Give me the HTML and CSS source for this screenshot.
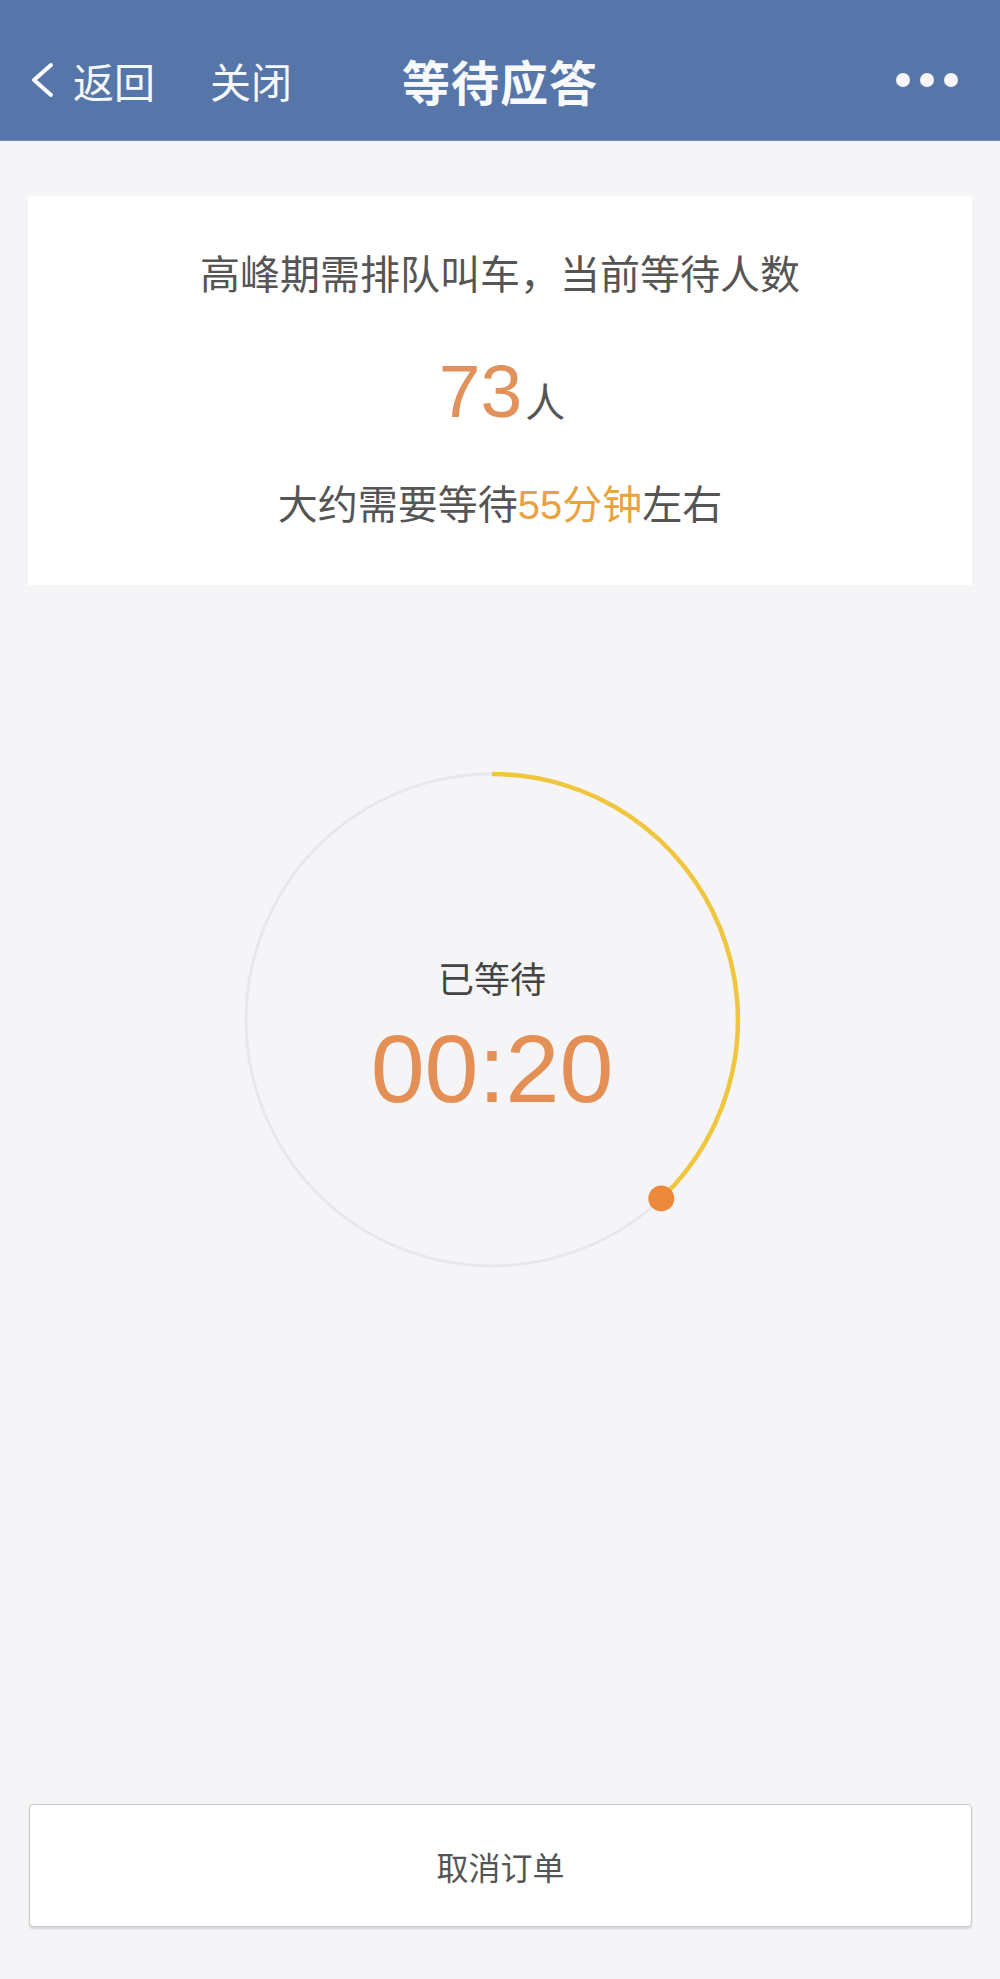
FILE: index.html
```html
<!DOCTYPE html>
<html lang="zh">
<head>
<meta charset="utf-8">
<link rel="stylesheet" href="styles.css">
</head>
<body>
<div class="page">
  <header class="nav">
    <div class="nav-left">
      <svg class="chev" width="28" height="36" viewBox="0 0 28 36"><path d="M23 3 L6 18 L23 33" fill="none" stroke="#fff" stroke-width="4" stroke-linecap="round" stroke-linejoin="round"/></svg>
      <span class="nav-link back">返回</span>
      <span class="nav-link close">关闭</span>
    </div>
    <div class="nav-title">等待应答</div>
    <div class="nav-right">
      <span class="dot"></span><span class="dot"></span><span class="dot"></span>
    </div>
  </header>

  <section class="card">
    <p class="line">高峰期需排队叫车，当前等待人数</p>
    <p class="count"><span class="num">73</span><span class="unit">人</span></p>
    <p class="line">大约需要等待<span class="hl">55分钟</span>左右</p>
  </section>

  <div class="ring">
    <svg class="ring-svg" width="520" height="520" viewBox="0 0 520 520">
      <circle cx="260" cy="260" r="246" fill="none" stroke="#e7e7ec" stroke-width="3"/>
      <path d="M260 14 A246 246 0 0 1 429.3 438.4" fill="none" stroke="#efc63e" stroke-width="4.5"/>
      <circle cx="429.3" cy="438.4" r="13" fill="#ec893b"/>
    </svg>
    <div class="ring-text">
      <div class="ring-label">已等待</div>
      <div class="ring-time">00:20</div>
    </div>
  </div>

  <button class="cancel">取消订单</button>
</div>
</body>
</html>
```

FILE: styles.css
```css
* { box-sizing: border-box; }
html, body { margin: 0; padding: 0; }
body {
  background: #f5f5f8;
  font-family: "Liberation Sans", "Noto Sans CJK SC", sans-serif;
  color: #555;
}
.page {
  width: 1000px;
  min-height: 1979px;
  display: flex;
  flex-direction: column;
  padding-bottom: 52px;
}
.nav {
  height: 141px;
  padding-top: 20px;
  background: #5675a9;
  display: grid;
  grid-template-columns: 1fr auto 1fr;
  align-items: center;
  color: #fff;
  border-bottom: 1px solid #6d8bb5;
}
.nav-left {
  display: flex;
  align-items: center;
  padding-left: 28px;
}
.chev { display: block; }
.nav-link {
  font-family: "Noto Sans CJK SC", sans-serif;
  font-size: 41px;
  line-height: 48px;
  color: #f4f7fb;
}
.back { margin-left: 17px; }
.close { margin-left: 55px; }
.nav-title {
  font-family: "Noto Sans CJK SC", sans-serif;
  font-size: 48px;
  font-weight: 700;
  line-height: 56px;
  color: #f7f9fc;
  letter-spacing: 1px;
}
.nav-right {
  display: flex;
  justify-content: flex-end;
  gap: 10px;
  padding-right: 42px;
}
.dot {
  width: 14px;
  height: 14px;
  border-radius: 50%;
  background: #f6f8fb;
}
.card {
  margin: 55px 28px 0;
  background: #fff;
  height: 389px;
  padding-top: 55px;
  text-align: center;
}
.card p { margin: 0; }
.line {
  font-size: 40px;
  line-height: 48px;
  color: #555;
}
.count {
  margin-top: 55px !important;
  height: 75px;
  line-height: 75px;
  margin-bottom: 52px !important;
  padding-left: 4px;
}
.num {
  font-family: "Liberation Sans", sans-serif;
  font-size: 75px;
  color: #e2915b;
}
.unit {
  font-family: "Noto Sans CJK SC", sans-serif;
  font-size: 40px;
  color: #555;
  margin-left: 3px;
}
.hl { color: #e9a23f; }
.ring {
  margin: 175px 0 0 232px;
  width: 520px;
  height: 520px;
  display: grid;
}
.ring-svg { grid-area: 1 / 1; display: block; }
.ring-text {
  grid-area: 1 / 1;
  align-self: start;
  margin-top: 195px;
  text-align: center;
}
.ring-label {
  font-family: "Noto Sans CJK SC", sans-serif;
  font-size: 36px;
  line-height: 44px;
  color: #444;
}
.ring-time {
  margin-top: 21px;
  font-family: "Liberation Sans", sans-serif;
  font-size: 97px;
  line-height: 97px;
  color: #e38f55;
}
.cancel {
  margin: 524px 28px 0 29px;
  height: 123px;
  background: #fff;
  border: 1px solid #c9c9cd;
  border-radius: 4px;
  box-shadow: 0 2px 2px rgba(0,0,0,0.12);
  font-family: "Noto Sans CJK SC", sans-serif;
  font-size: 32px;
  color: #555;
  padding: 0;
}
```
